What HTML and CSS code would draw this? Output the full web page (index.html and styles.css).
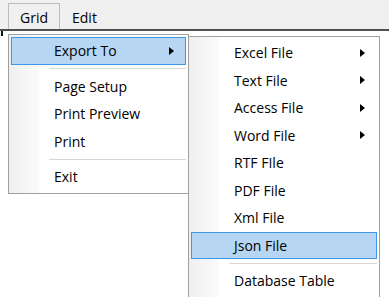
FILE: index.html
```html
<!DOCTYPE html>
<html lang="en">
<head>
  <meta charset="UTF-8">
  <title>Grid menu</title>
  <link rel="stylesheet" href="styles.css">
</head>
<body>
  <div class="menubar">
    <div class="top-item open">Grid</div>
    <div class="top-item">Edit</div>
  </div>
  <div class="grid-edge"></div>

  <div class="dropdown main">
    <div class="item active">Export To <span class="arrow"></span></div>
    <div class="sep"></div>
    <div class="item">Page Setup</div>
    <div class="item">Print Preview</div>
    <div class="item">Print</div>
    <div class="sep"></div>
    <div class="item">Exit</div>
  </div>

  <div class="dropdown sub">
    <div class="item">Excel File <span class="arrow"></span></div>
    <div class="item">Text File <span class="arrow"></span></div>
    <div class="item">Access File <span class="arrow"></span></div>
    <div class="item">Word File <span class="arrow"></span></div>
    <div class="item">RTF FIle</div>
    <div class="item">PDF File</div>
    <div class="item">Xml File</div>
    <div class="item active">Json File</div>
    <div class="sep"></div>
    <div class="item">Database Table</div>
  </div>
</body>
</html>
```

FILE: styles.css
```css
body {
  margin: 0;
  width: 389px;
  height: 297px;
  overflow: hidden;
  background: #fff;
  font-family: "Open Sans", "Noto Sans", sans-serif;
  font-size: 14px;
  color: #000;
  position: relative;
}

.menubar {
  display: flex;
  height: 31px;
  padding: 3px 0 0 8px;
  box-sizing: border-box;
  background: #f0f0f0;
  border-bottom: 2px solid #505050;
}

.top-item {
  padding: 0 11px;
  line-height: 27px;
  border: 1px solid transparent;
  border-bottom: none;
}

.top-item.open {
  border-color: #bdbdbd;
}

.grid-edge {
  width: 2px;
  height: 5px;
  margin-left: 1px;
  background: #111;
}

/* popup menus */
.dropdown {
  position: absolute;
  box-sizing: border-box;
  border: 1px solid #a0a0a0;
  padding: 2px;
  background-color: #fff;
  background-image: linear-gradient(to right, #efefef, #fbfbfb);
  background-size: 31px 100%;
  background-repeat: no-repeat;
  background-origin: border-box;
}

.dropdown.main {
  left: 8px;
  top: 34px;
  width: 181px;
}

.dropdown.sub {
  left: 188px;
  top: 36px;
  width: 192px;
}

.item {
  display: flex;
  align-items: center;
  justify-content: space-between;
  height: 27.5px;
  box-sizing: border-box;
  padding: 0 11px 0 42px;
  border: 1px solid transparent;
}

.item.active {
  background: #b6d6f3;
  border-color: #3d96e6;
}

.arrow {
  width: 0;
  height: 0;
  border-left: 5px solid #000;
  border-top: 4.5px solid transparent;
  border-bottom: 4.5px solid transparent;
}

.sep {
  height: 8px;
  margin-left: 38px;
  display: flex;
  align-items: center;
}

.sep::before {
  content: "";
  flex: 1;
  height: 1px;
  background: #d7d7d7;
  box-shadow: 0 1px 0 #fff;
}
```
